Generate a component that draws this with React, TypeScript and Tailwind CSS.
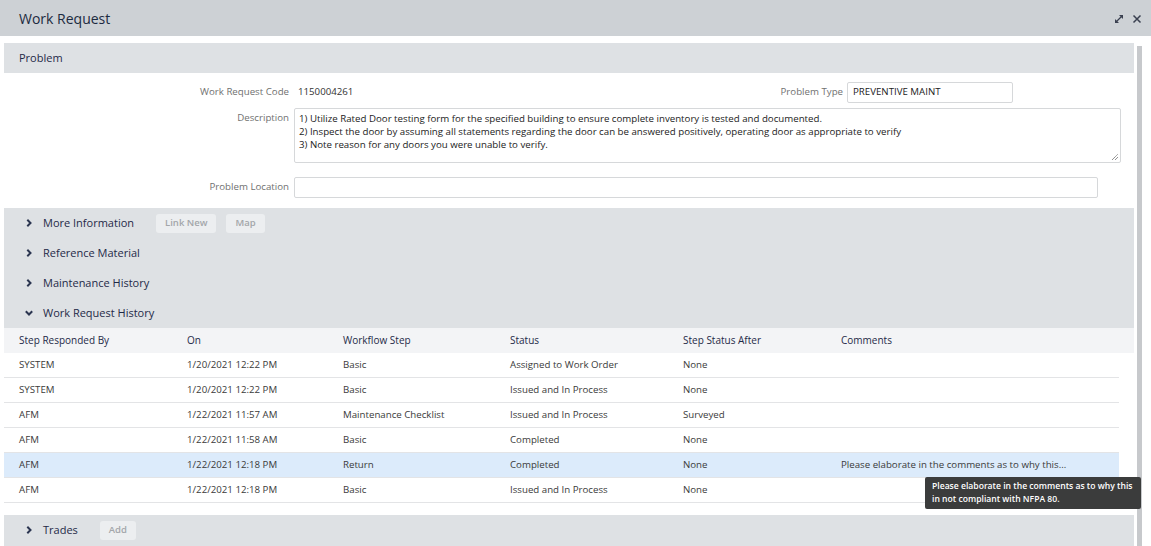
import React from 'react';

const rows = [
  { by: 'SYSTEM', on: '1/20/2021 12:22 PM', step: 'Basic', status: 'Assigned to Work Order', after: 'None', comments: '' },
  { by: 'SYSTEM', on: '1/20/2021 12:22 PM', step: 'Basic', status: 'Issued and In Process', after: 'None', comments: '' },
  { by: 'AFM', on: '1/22/2021 11:57 AM', step: 'Maintenance Checklist', status: 'Issued and In Process', after: 'Surveyed', comments: '' },
  { by: 'AFM', on: '1/22/2021 11:58 AM', step: 'Basic', status: 'Completed', after: 'None', comments: '' },
  { by: 'AFM', on: '1/22/2021 12:18 PM', step: 'Return', status: 'Completed', after: 'None', comments: 'Please elaborate in the comments as to why this...' },
  { by: 'AFM', on: '1/22/2021 12:18 PM', step: 'Basic', status: 'Issued and In Process', after: 'None', comments: '' },
];

const Chevron = ({ open }: { open?: boolean }) => (
  <svg width="10" height="10" viewBox="0 0 10 10" className="shrink-0">
    {open ? (
      <polyline points="1.8,3.3 5,6.5 8.2,3.3" fill="none" stroke="#2b3550" strokeWidth="2" />
    ) : (
      <polyline points="3.3,1.8 6.5,5 3.3,8.2" fill="none" stroke="#2b3550" strokeWidth="2" />
    )}
  </svg>
);

const GhostButton = ({ label }: { label: string }) => (
  <span className="h-[19px] px-[9px] flex items-center rounded-[3px] bg-[#eceef0] text-[9.5px] font-semibold text-[#a3a6aa]">
    {label}
  </span>
);

const SectionRow = ({ label, open, children }: { label: string; open?: boolean; children?: React.ReactNode }) => (
  <div className="h-[30px] flex items-center pl-[20px]">
    <Chevron open={open} />
    <span className="ml-[9px] text-[11px] text-[#1f2a48]">{label}</span>
    {children && <div className="ml-[22px] flex gap-[10px]">{children}</div>}
  </div>
);

const cols = ['w-[168px]', 'w-[156px]', 'w-[167px]', 'w-[173px]', 'w-[158px]', 'flex-1'];

export default function App() {
  return (
    <div className="w-[1151px] h-[546px] overflow-hidden bg-white text-[#333] font-['Open_Sans',sans-serif]">
      {/* title bar */}
      <div className="h-[36px] bg-[#cdd1d5] flex items-center justify-between pl-[19px] pr-[9px]">
        <span className="text-[14px] text-[#1c2a40]">Work Request</span>
        <div className="flex items-center gap-[8px] pt-[2px]">
          <svg width="10" height="10" viewBox="0 0 10 10">
            <line x1="2" y1="8" x2="8" y2="2" stroke="#3a4050" strokeWidth="1.3" />
            <polygon points="5,1 9,1 9,5" fill="#3a4050" />
            <polygon points="1,5 1,9 5,9" fill="#3a4050" />
          </svg>
          <svg width="10" height="10" viewBox="0 0 10 10">
            <path d="M1.5 1.5 L8.5 8.5 M8.5 1.5 L1.5 8.5" stroke="#3a4050" strokeWidth="1.5" />
          </svg>
        </div>
      </div>

      <div className="flex">
        <div className="ml-[4px] w-[1130px] pt-[7px]">
          {/* Problem */}
          <div className="h-[30px] bg-[#dee1e4] flex items-center pl-[15px]">
            <span className="text-[11px] font-medium text-[#1f2a48]">Problem</span>
          </div>

          <div className="h-[135px] pt-[9px] text-[9.7px]">
            <div className="flex items-center h-[20px]">
              <span className="w-[285px] text-right text-[#707070]">Work Request Code</span>
              <span className="ml-[9px] w-[405px]">1150004261</span>
              <span className="w-[140px] text-right text-[#707070]">Problem Type</span>
              <div className="ml-[4px] w-[166px] h-[21px] border border-[#d6d8da] rounded-[2px] flex items-center pl-[5px] text-[#222]">
                PREVENTIVE MAINT
              </div>
            </div>
            <div className="flex mt-[6px]">
              <span className="w-[285px] text-right text-[#707070] pt-[3px]">Description</span>
              <div className="relative ml-[5px] w-[827px] h-[55px] border border-[#d6d8da] rounded-[2px] px-[4px] pt-[3px] leading-[13px] text-[#222]">
                <div>1) Utilize Rated Door testing form for the specified building to ensure complete inventory is tested and documented.</div>
                <div>2) Inspect the door by assuming all statements regarding the door can be answered positively, operating door as appropriate to verify</div>
                <div>3) Note reason for any doors you were unable to verify.</div>
                <svg width="8" height="8" viewBox="0 0 8 8" className="absolute right-[1px] bottom-[1px]">
                  <path d="M1 7 L7 1 M4 7 L7 4" stroke="#555" strokeWidth="0.9" strokeDasharray="1 0.6" />
                </svg>
              </div>
            </div>
            <div className="flex items-center mt-[14px]">
              <span className="w-[285px] text-right text-[#707070]">Problem Location</span>
              <div className="ml-[5px] w-[804px] h-[21px] border border-[#d6d8da] rounded-[2px]" />
            </div>
          </div>

          {/* collapsible sections */}
          <div className="bg-[#dee1e4] h-[120px]">
            <SectionRow label="More Information">
              <GhostButton label="Link New" />
              <GhostButton label="Map" />
            </SectionRow>
            <SectionRow label="Reference Material" />
            <SectionRow label="Maintenance History" />
            <SectionRow label="Work Request History" open />
          </div>

          {/* history table */}
          <div className="text-[9.7px]">
            <div className="h-[25px] bg-[#f3f4f6] flex items-center pl-[15px] text-[#1f2a48] font-medium text-[10px]">
              <span className={cols[0]}>Step Responded By</span>
              <span className={cols[1]}>On</span>
              <span className={cols[2]}>Workflow Step</span>
              <span className={cols[3]}>Status</span>
              <span className={cols[4]}>Step Status After</span>
              <span className={cols[5]}>Comments</span>
            </div>
            <div className="relative w-[1115px]">
              {rows.map((r, i) => (
                <div
                  key={i}
                  className={`h-[25px] flex items-center pl-[15px] border-b border-[#e3e4e6] text-[#3a3a3a] ${i === 4 ? 'bg-[#dcebfb]' : ''}`}
                >
                  <span className={cols[0]}>{r.by}</span>
                  <span className={cols[1]}>{r.on}</span>
                  <span className={cols[2]}>{r.step}</span>
                  <span className={cols[3]}>{r.status}</span>
                  <span className={cols[4]}>{r.after}</span>
                  <span className={cols[5]}>{r.comments}</span>
                </div>
              ))}
              <div className="absolute left-[921px] top-[124px] w-[216px] h-[32px] bg-[#3b3c3c] rounded-[2px] pl-[7px] pt-[3px] text-[8.6px] font-semibold leading-[13px] text-white whitespace-nowrap z-10">
                Please elaborate in the comments as to why this
                <br />
                in not compliant with NFPA 80.
              </div>
            </div>
          </div>

          <div className="mt-[12px] bg-[#dee1e4] h-[31px]">
            <SectionRow label="Trades">
              <GhostButton label="Add" />
            </SectionRow>
          </div>
        </div>
        <div className="ml-[3px] mt-[10px] w-[5px] h-[500px] bg-[#c7c9cc]" />
      </div>
    </div>
  );
}
